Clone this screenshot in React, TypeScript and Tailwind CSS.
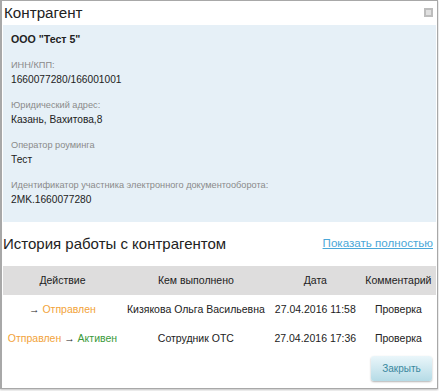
import React from "react";

const rows = [
  {
    action: (
      <>
        <span className="text-[#222]">→ </span>
        <span className="text-[#f2a33a]">Отправлен</span>
      </>
    ),
    by: "Кизякова Ольга Васильевна",
    date: "27.04.2016 11:58",
    comment: "Проверка",
  },
  {
    action: (
      <>
        <span className="text-[#f2a33a]">Отправлен</span>
        <span className="text-[#222]"> → </span>
        <span className="text-[#3a9a3a]">Активен</span>
      </>
    ),
    by: "Сотрудник ОТС",
    date: "27.04.2016 17:36",
    comment: "Проверка",
  },
];

function Field({ label, value }: { label: string; value: string }) {
  return (
    <div className="flex flex-col">
      <div className="text-[9.2px] leading-[14px] text-[#8a8a8a]">{label}</div>
      <div className="text-[10.2px] leading-[15px] text-[#222]">{value}</div>
    </div>
  );
}

export default function App() {
  return (
    <div className="w-[439px] h-[391px] bg-white font-['Liberation_Sans',Arial,sans-serif]">
      <div className="relative w-[438px] h-[389px] border border-[#a8a8a8] border-l-2 shadow-[0_1px_2px_rgba(0,0,0,0.25)] flex flex-col">
        <div className="h-[24px] flex items-center pl-[2px]">
          <span className="text-[15.2px] leading-none text-[#222]">Контрагент</span>
        </div>
        <div className="absolute right-[4px] top-[7px] w-[9px] h-[9px] bg-[#bdbdbd] flex items-center justify-center">
          <div className="w-[5px] h-[5px] bg-[#e0e0e0]" />
        </div>
        <div className="mr-[1px] ml-[1px] h-[197px] bg-[#e6f0f7] px-[8px] pt-[7px] flex flex-col">
          <div className="text-[10.6px] leading-[14px] font-bold text-[#222]">ООО "Тест 5"</div>
          <div className="flex flex-col gap-[11px] mt-[12px]">
            <Field label="ИНН/КПП:" value="1660077280/166001001" />
            <Field label="Юридический адрес:" value="Казань, Вахитова,8" />
            <Field label="Оператор роуминга" value="Тест" />
            <Field label="Идентификатор участника электронного документооборота:" value="2MK.1660077280" />
          </div>
        </div>
        <div className="h-[44px] flex items-center justify-between pl-[1px] pr-[4px] pb-[2px]">
          <span className="text-[15px] leading-none text-[#222]">История работы с контрагентом</span>
          <a className="text-[11.6px] leading-none text-[#4aa7d8] underline">Показать полностью</a>
        </div>
        <table className="mx-[1px] w-[433px] border-collapse text-[10.5px] text-[#222]">
          <thead>
            <tr className="bg-[#dedddd] h-[29px]">
              <th className="font-normal px-[4px]">Действие</th>
              <th className="font-normal px-[4px]">Кем выполнено</th>
              <th className="font-normal px-[4px]">Дата</th>
              <th className="font-normal px-[4px]">Комментарий</th>
            </tr>
          </thead>
          <tbody>
            {rows.map((r, i) => (
              <tr key={i} className="h-[29px]">
                <td className="text-center px-[4px] whitespace-nowrap">{r.action}</td>
                <td className="text-center px-[4px] whitespace-nowrap">{r.by}</td>
                <td className="text-center px-[4px] whitespace-nowrap">{r.date}</td>
                <td className="text-center px-[4px] whitespace-nowrap">{r.comment}</td>
              </tr>
            ))}
          </tbody>
        </table>
        <div className="flex justify-end pr-[5px] mt-[3px]">
          <button className="w-[61px] h-[25px] rounded-[3px] bg-gradient-to-b from-[#eaf6fa] to-[#b5dbe6] shadow-[0_1px_2px_rgba(0,0,0,0.3)] text-[10px] text-[#3a889e]">
            Закрыть
          </button>
        </div>
      </div>
    </div>
  );
}
